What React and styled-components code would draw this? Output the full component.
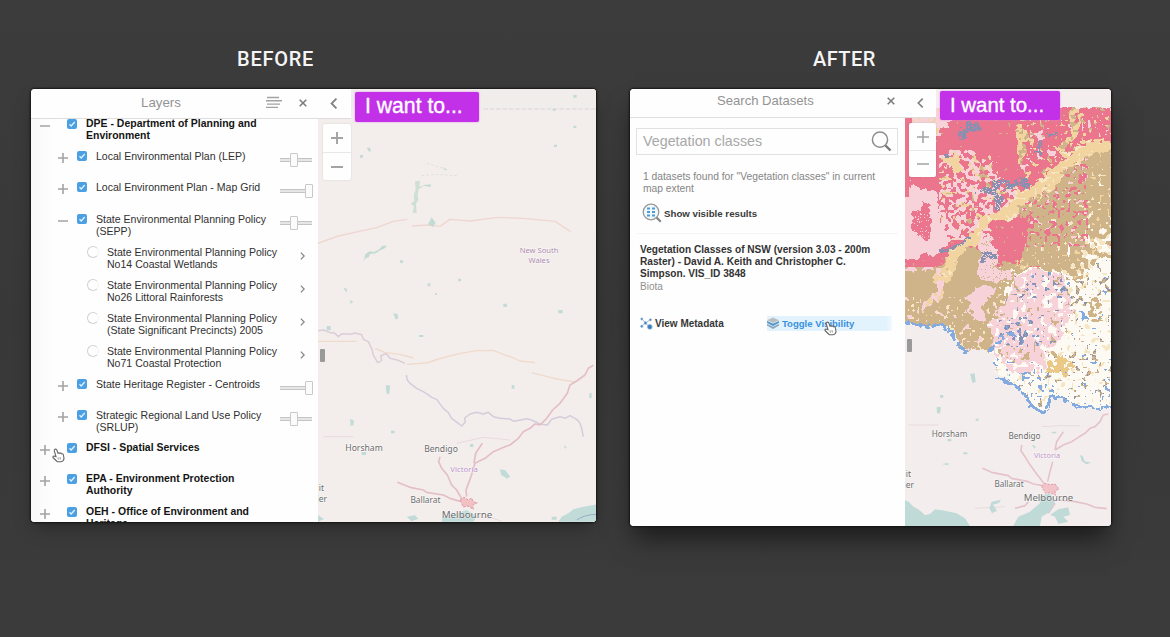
import React from "react";
import styled, { createGlobalStyle } from "styled-components";

const GlobalStyle = createGlobalStyle`
  * { box-sizing: border-box; }
  body { margin: 0; background: #3a3a3a; font-family: "Liberation Sans", Arial, sans-serif; }
  button { font: inherit; border: 0; padding: 0; background: none; }
`;

const Stage = styled.main`
  width: 1170px;
  height: 637px;
  padding: 47px 59px 0 31px;
  display: flex;
  align-items: flex-start;
  gap: 34px;
  overflow: hidden;
  background: linear-gradient(#3c3c3c, #383838 50%, #3b3b3b);
`;

const Column = styled.section`
  width: ${(p) => p.$width}px;
  flex: none;
`;

const Caption = styled.h2`
  margin: 0;
  height: 42px;
  padding-left: ${(p) => p.$indent}px;
  font: 500 20px/25px Roboto, sans-serif;
  letter-spacing: ${(p) => p.$spacing || 0}px;
  color: #f5f5f5;
`;

const Window = styled.div`
  position: relative;
  display: flex;
  height: ${(p) => p.$height}px;
  border-radius: 4px;
  overflow: hidden;
  background: #fefefe;
`;

const Shadow = styled.div`
  border-radius: 4px;
  box-shadow: 0 0 2px 1px #151515, ${(p) => (p.$deep ? "0 16px 24px -4px rgba(0,0,0,.55)" : "0 8px 18px -4px rgba(0,0,0,.35)")};
`;

const Panel = styled.aside`
  width: ${(p) => p.$width}px;
  flex: none;
  display: flex;
  flex-direction: column;
  overflow: hidden;
  background: #fefefe;
`;

const PanelHeader = styled.header`
  height: ${(p) => p.$height}px;
  flex: none;
  display: flex;
  align-items: center;
  border-bottom: 1px solid #dedede;
  padding: 0 ${(p) => p.$right}px ${(p) => p.$lift}px 0;
  gap: 17px;
  color: #858585;
`;

const PanelTitle = styled.h3`
  margin: 0;
  padding-left: ${(p) => p.$indent}px;
  flex: 1;
  font-weight: 400;
  font-size: ${(p) => p.$size}px;
  line-height: 16px;
  color: #939393;
  white-space: nowrap;
`;

const LayerList = styled.ul`
  list-style: none;
  margin: -1px 0 0;
  padding: 0;
`;

const ListClip = styled.div`
  flex: 1;
  overflow: hidden;
`;

const LayerRow = styled.li`
  height: ${(p) => p.$height}px;
  display: flex;
  align-items: flex-start;
  padding-left: ${(p) => [9, 27, 56][p.$level]}px;
  padding-right: ${(p) => (p.$level === 2 ? 13 : 5)}px;
  background: linear-gradient(90deg, #f9f8f8, #fefefe 20px);
`;

const Expander = styled.span`
  width: 10px;
  height: 12px;
  margin-right: ${(p) => (p.$level === 0 ? 17 : 9)}px;
  padding-top: 3px;
  display: flex;
`;

const Tick = styled.span`
  width: 10px;
  height: 10px;
  margin: 1px 9px 0 0;
  border-radius: 2px;
  background: #4b9fe3;
  display: flex;
`;

const Radio = styled.span`
  width: 12px;
  height: 12px;
  margin: 0 8px 0 0;
  border-radius: 50%;
  border: 1px solid #d2d2d2;
  border-right-color: #f3f3f3;
`;

const LayerName = styled.span`
  flex: 1;
  font-size: ${(p) => (p.$strong ? 10.44 : 10.55)}px;
  line-height: 12px;
  letter-spacing: ${(p) => (p.$strong ? 0.02 : 0)}px;
  font-weight: ${(p) => (p.$strong ? 700 : 400)};
  color: ${(p) => (p.$strong ? "#141414" : "#303030")};
  white-space: pre-line;
`;

const RowChevron = styled.span`
  padding-top: 6px;
  display: flex;
  color: #868686;
`;

const SliderTrack = styled.span`
  width: 33px;
  height: 14px;
  margin-top: 3px;
  padding-left: ${(p) => (p.$full ? 25 : 10)}px;
  background: linear-gradient(#c4c4c4, #c4c4c4) 0 5px / ${(p) => (p.$full ? 28 : 32)}px 1px no-repeat,
    linear-gradient(#c4c4c4, #c4c4c4) 0 8px / ${(p) => (p.$full ? 28 : 32)}px 1px no-repeat,
    linear-gradient(#e6e6e6, #e6e6e6) 0 6px / ${(p) => (p.$full ? 28 : 32)}px 2px no-repeat;
`;

const SliderThumb = styled.span`
  display: block;
  width: 8px;
  height: 14px;
  border: 1px solid #c9c9c9;
  border-radius: 1px;
  background: #fbfbfb;
`;

const MapPane = styled.div`
  position: relative;
  flex: 1;
  min-width: 0;
  background: #f3eeec;
`;

const MapSvg = styled.svg`
  display: block;
`;

/* Controls floating over the map canvas. */
const MapControls = styled.div`
  position: absolute;
  inset: 0 auto auto 0;
  display: flex;
  align-items: flex-start;
`;

const ControlStack = styled.div`
  width: ${(p) => p.$width}px;
  display: flex;
  flex-direction: column;
  align-items: flex-end;
  gap: ${(p) => p.$gap}px;
`;

const BackButton = styled.button`
  width: 100%;
  height: ${(p) => p.$height}px;
  padding-right: 1px;
  display: grid;
  place-items: center;
  background: #fefefe;
  border-bottom: 1px solid #ddd;
  color: #828282;
`;

const ZoomBox = styled.div`
  width: ${(p) => p.$width}px;
  background: #fefefe;
  border-radius: 2px;
  box-shadow: 0 0 2px rgba(0, 0, 0, 0.14);
`;

const ZoomButton = styled.button`
  display: grid;
  place-items: center;
  width: 100%;
  height: ${(p) => p.$height}px;
  & + & { border-top: 1px solid #e8e8e8; }
`;

const WantButton = styled.button`
  width: ${(p) => p.$width}px;
  height: ${(p) => p.$height}px;
  margin: ${(p) => p.$top}px 0 0 4px;
  padding: 0 0 2px 10px;
  border-radius: 2px;
  background: #c231e8;
  box-shadow: 0 0 2px #dd83f2;
  color: #fff;
  text-align: left;
  font-size: ${(p) => p.$size}px;
  line-height: 24px;
  -webkit-text-stroke: 0.35px #fff;
  white-space: nowrap;
`;

const Handle = styled.div`
  position: absolute;
  left: 2px;
  top: ${(p) => p.$top}px;
  width: 5px;
  height: 13px;
  border-radius: 1px;
  background: #999;
`;

const SearchBody = styled.div`
  display: flex;
  flex-direction: column;
  padding: 10px 7px 0 6px;
`;

const SearchField = styled.div`
  height: 27px;
  display: flex;
  align-items: center;
  justify-content: space-between;
  padding: 0 5px 1px 6px;
  border: 1px solid #e2e2e2;
  font-size: 14.3px;
  color: #a8a8a8;
`;

const ResultCount = styled.p`
  margin: 16px 0 0 7px;
  font-size: 10.28px;
  line-height: 12px;
  color: #858585;
  white-space: pre-line;
`;

const ShowVisible = styled.button`
  display: flex;
  align-items: center;
  gap: 2px;
  height: 20px;
  margin: 8px 0 0 6px;
  font-size: 9.7px;
  font-weight: 700;
  color: #3a3a3a;
`;

const ResultCard = styled.article`
  margin-top: 10px;
  padding: 10px 0 0 4px;
  border-top: 1px solid #f5f5f5;
`;

const ResultTitle = styled.h4`
  margin: 0;
  font-size: 10.12px;
  line-height: 12px;
  color: #333;
  white-space: pre-line;
`;

const ResultTopic = styled.p`
  margin: 0;
  font-size: 10px;
  line-height: 13px;
  color: #909090;
`;

const ActionBar = styled.div`
  display: flex;
  margin-top: 23px;
`;

const Action = styled.button`
  width: ${(p) => p.$width}px;
  height: 15px;
  display: flex;
  align-items: center;
  gap: ${(p) => (p.$active ? 3 : 2)}px;
  font-size: ${(p) => (p.$active ? 9.55 : 10)}px;
  font-weight: 700;
  color: ${(p) => (p.$active ? "#3990dc" : "#363636")};
  background: ${(p) => (p.$active ? "linear-gradient(90deg, #e2f3fd 95%, #f1f9fe)" : "none")};
`;

const Pointer = styled.svg`
  position: absolute;
  left: ${(p) => p.$x}px;
  top: ${(p) => p.$y}px;
`;

const Plus = ({ size = 10, minus = false, w = 1.6 }) => (
  <svg width={size} height={size} viewBox="0 0 10 10" stroke="#a3a3a3" strokeWidth={w} fill="none">
    <path d={minus ? "M0 5H10" : "M0 5H10M5 0V10"} />
  </svg>
);

const Check = () => (
  <svg width="10" height="10" viewBox="0 0 10 10" fill="none" stroke="#e6f4ff" strokeWidth="1.3">
    <path d="M2.5 5.3 4.2 7 7.7 3" />
  </svg>
);

const Chevron = ({ back, width = 5, height = 8 }) => (
  <svg width={width} height={height} viewBox="0 0 6 9" fill="none" stroke="currentColor" strokeWidth="1.5">
    <path d={back ? "M5 .5 1 4.5 5 8.5" : "M1 .5 5 4.5 1 8.5"} />
  </svg>
);

const Cross = () => (
  <svg width="8" height="8" viewBox="0 0 8 8" stroke="#7c7c7c" strokeWidth="1.6">
    <path d="M.7.7 7.3 7.3M7.3.7.7 7.3" />
  </svg>
);

const LinesIcon = () => (
  <svg width="16" height="13" viewBox="0 0 16 13" stroke="#a2a2a2" strokeWidth="1.4">
    <path d="M1 1.5H13M0 4.8H16M1 8.1H14M0 11.4H12" />
  </svg>
);

const Hand = ({ x, y }) => (
  <Pointer $x={x} $y={y} width="13" height="15" viewBox="0 0 13 15">
    <path
      d="M3 1.2Q4.3.7 4.8 2L6 5.2Q7.2 4.5 7.8 5.3 9 4.7 9.5 5.8 11 5.4 11.4 7L12 10.5Q11.8 13.3 9 13.8L5.5 13.8Q4 12.5 1 9.5.7 8 2 8L4 8.7 2.3 3Q2 1.8 3 1.2Z"
      fill="#fff" stroke="#666" strokeWidth="1.1"
    />
    <path d="M6 9.5 6.4 11.6M8 9.2 8.3 11.5" stroke="#777" strokeWidth=".8" />
  </Pointer>
);

const SearchIcon = () => (
  <svg width="21" height="21" viewBox="0 0 21 21" fill="none">
    <circle cx="9" cy="8.7" r="7.6" stroke="#8d8d8d" strokeWidth="1.5" />
    <path d="m14.5 14.5 5 5" stroke="#777" strokeWidth="2.4" />
  </svg>
);

const VisibleIcon = () => (
  <svg width="20" height="20" viewBox="0 0 20 20" fill="none">
    <circle cx="9" cy="9" r="7.8" stroke="#999" strokeWidth="1.3" fill="#f2f9fd" />
    <path d="m14.6 14.6 4.2 4.2" stroke="#888" strokeWidth="2.2" />
    <path d="M5 5.5H8M5 9H8M5 12.5H8M10 5.5H13M10 9H13M10 12.5H13" stroke="#4d9bd7" strokeWidth="2" />
  </svg>
);

const MetadataIcon = () => (
  <svg width="13" height="13" viewBox="0 0 13 13" fill="#397dbb" stroke="#86acd0" strokeWidth=".8">
    <path d="m2 2 3.5 4L10 2.8M5.5 6 2 9M5.5 6 9.5 10" fill="none" />
    <circle cx="1.8" cy="1.9" r="1" /><circle cx="10.4" cy="2.8" r="1" /><circle cx="5.5" cy="6" r="1.3" />
    <circle cx="1.8" cy="9.3" r="1.1" /><circle cx="9.8" cy="9.9" r="2.3" />
  </svg>
);

const LayersIcon = () => (
  <svg width="12" height="13" viewBox="0 0 12 13">
    <path d="m0 8.5 6 3.5 6-3.5V6.8L6 9.8 0 6.8Z" fill="#8aa7bd" />
    <path d="m0 5.7 6 3.3 6-3.3V4L6 6.8 0 4Z" fill="#4d93c7" />
    <path d="m0 3.2 6-2.7 6 2.7L6 6Z" fill="#b9bec0" />
  </svg>
);

/* Deterministic noise, so that the raster looks the same on every render. */
const hash = (x, y, s = 0) => {
  let h = Math.imul(x + 1013, 374761393) ^ Math.imul(y + 577, 668265263) ^ Math.imul(s + 7, 974634777);
  h = Math.imul(h ^ (h >>> 13), 1274126177);
  return ((h ^ (h >>> 16)) >>> 0) / 4294967296;
};
const noise = (x, y, s) => {
  const i = Math.floor(x), j = Math.floor(y), u = x - i, v = y - j;
  const a = hash(i, j, s) * (1 - u) + hash(i + 1, j, s) * u;
  const b = hash(i, j + 1, s) * (1 - u) + hash(i + 1, j + 1, s) * u;
  return a * (1 - v) + b * v;
};
const inside = (pts, x, y) => {
  let hit = false;
  for (let i = 0, j = pts.length - 2; i < pts.length; j = i, i += 2) {
    if (pts[i + 1] > y !== pts[j + 1] > y &&
      x < ((pts[j] - pts[i]) * (y - pts[i + 1])) / (pts[j + 1] - pts[i + 1]) + pts[i]) hit = !hit;
  }
  return hit;
};
const near = (pts, r, x, y) => {
  for (let i = 0; i + 3 < pts.length; i += 2) {
    const dx = pts[i + 2] - pts[i], dy = pts[i + 3] - pts[i + 1];
    const t = Math.max(0, Math.min(1, ((x - pts[i]) * dx + (y - pts[i + 1]) * dy) / (dx * dx + dy * dy)));
    if (Math.hypot(x - pts[i] - t * dx, y - pts[i + 1] - t * dy) < r) return true;
  }
  return false;
};

const ROSE = "#ea758d", BLUSH = "#f7d3d9", TAN = "#cfb48a", SAND = "#f1d49f", PALE = "#f6e6c4";
const CREAM = "#fdfaf4", SLATE = "#8790b0", BLUE = "#83abe0", OCHRE = "#eac885";

/* Vegetation classes in map units (three to a pixel). */
const EXTENT = [0, 82, 660, 82, 660, 985, 600, 985, 540, 970, 500, 955, 462, 945, 455, 990, 435, 1000, 405, 975, 385, 935, 340, 900, 310, 880, 290, 850, 300, 825, 270, 810, 215, 812, 190, 800, 180, 760, 140, 735, 90, 738, 0, 722];
const TAN_AREA = [0, 575, 130, 565, 180, 515, 255, 508, 290, 550, 375, 552, 395, 470, 400, 410, 340, 380, 450, 295, 520, 240, 660, 190, 660, 650, 560, 610, 430, 560, 350, 585, 320, 640, 370, 680, 300, 740, 290, 810, 180, 810, 90, 745, 0, 745];
const CREAM_AREA = [660, 540, 610, 540, 560, 600, 500, 620, 520, 700, 490, 770, 440, 830, 370, 840, 290, 810, 280, 1010, 660, 1010];
const BLUSH_LOW = [350, 590, 430, 565, 510, 600, 530, 690, 500, 770, 440, 830, 390, 850, 330, 820, 300, 790, 280, 740, 310, 700, 340, 650];
const BLUSH_WEST = [0, 350, 50, 300, 85, 330, 125, 340, 145, 420, 155, 460, 150, 520, 90, 530, 0, 545];
const ROSE_WEST = [65, 400, 85, 350, 105, 400, 110, 465, 75, 480, 50, 460];
const ROSE_MID = [285, 420, 380, 395, 400, 420, 385, 500, 375, 545, 330, 545, 300, 520];
const RIVER = [650, 190, 580, 210, 520, 240, 440, 310, 340, 385, 270, 425, 230, 485, 175, 525, 155, 590];
const BLUE_EDGE = [[30, 727, 95, 738, 135, 734, 168, 756, 188, 798, 210, 815, 225, 795], [285, 810, 312, 788, 328, 758, 365, 765], [310, 895, 350, 912, 385, 938, 405, 973, 435, 996, 455, 987, 462, 948, 500, 955, 540, 975, 600, 986, 645, 980]];
const SLATE_SPOTS = [[200, 155, 235, 130, 13], [310, 305, 345, 308, 15], [265, 337, 305, 340, 10], [307, 310, 307, 370, 9], [370, 306, 390, 306, 9], [155, 518, 225, 478, 7], [455, 170, 475, 162, 6], [430, 190, 425, 222, 5], [270, 525, 285, 520, 9], [145, 220, 160, 222, 5]];

const vegetationAt = (c, r) => {
  const px = c * 3 + 31, py = r * 3 + 82;
  const x = px + (noise(c / 7, r / 7, 1) - 0.5) * 32 + (noise(c / 2.5, r / 2.5, 11) - 0.5) * 14;
  const y = py + (noise(c / 7, r / 7, 3) - 0.5) * 32 + (noise(c / 2.5, r / 2.5, 12) - 0.5) * 14;
  const n = noise(c / 2.6, r / 2.6, 5), m = noise(c / 3.4, r / 3.4, 6), k = hash(c, r, 7);
  const wx = px + (noise(c / 3, r / 3, 8) - 0.5) * 14, wy = py + (noise(c / 3, r / 3, 9) - 0.5) * 14;
  if (BLUE_EDGE.some((e) => near(e, 4.4, wx, wy)) && n > 0.32) return BLUE;
  if (!inside(EXTENT, wx, wy)) return null;
  if (SLATE_SPOTS.some(([a, b, d, e, w]) => near([a, b, d, e], w, x, y)) && k > 0.18) return SLATE;
  if (near(RIVER, 15, px + (x - px) * 0.7, py + (y - py) * 0.7)) return n > 0.8 ? PALE : SAND;
  if (near(RIVER, 28, x, y) && px > 320 && m > 0.5) return n > 0.5 ? PALE : SAND;
  if (px < 42 && py > 280 && py < 350) return ROSE;
  if (inside(ROSE_WEST, x, y)) return k > 0.9 ? BLUSH : ROSE;
  if (inside(BLUSH_WEST, x, y)) return BLUSH;
  if (inside(ROSE_MID, x, y)) return n > 0.88 ? TAN : ROSE;
  if (near([250, 480, 285, 520, 265, 575, 320, 585], 19, x, y)) return k > 0.93 ? TAN : BLUSH;
  if (near([275, 630, 235, 680, 255, 710], 19, x, y)) return BLUSH;
  if (near([135, 580, 135, 640, 95, 680], 13, x, y)) return n > 0.6 ? SAND : BLUSH;
  if (inside(BLUSH_LOW, x, y)) {
    const band = (py > 575 && py < 655) || (py > 710 && py < 800 && px > 330 && px < 450);
    if (n > (band ? 0.66 : 0.84)) return k > 0.3 ? SLATE : BLUE;
    return m > 0.8 ? TAN : m < 0.26 || (px > 440 && m < 0.36) ? CREAM : BLUSH;
  }
  if (inside(CREAM_AREA, x, y)) {
    if (near([470, 865, 510, 860], 19, x, y) && n > 0.25) return OCHRE;
    if (near([595, 670, 600, 730], 12, x, y) && n > 0.4) return TAN;
    if (near([325, 820, 370, 860, 430, 840], 25, x, y) && m > 0.35) return BLUSH;
    if (near([350, 875, 400, 890, 450, 920], 17, x, y) && n > 0.67) return BLUE;
    const high = py < 680 ? 0.12 : 0;
    return n > 0.8 - high ? (k > 0.3 ? TAN : SLATE) : m > 0.79 ? PALE : m < 0.14 ? BLUE : CREAM;
  }
  if (inside(TAN_AREA, x, y)) {
    if (px < 310) return py > 650 && n > 0.76 ? (m > 0.5 ? PALE : BLUSH) : TAN;
    if (px > 380 && py < 500 && px < 580 && n > 0.64) return m > 0.3 ? ROSE : BLUSH;
    const fade = Math.max(0, (px - 430) / 220) * Math.max(0, (py - 330) / 250);
    if (m > 0.86 - fade * 0.5) return n > 0.5 ? CREAM : PALE;
    return n > 0.82 ? SAND : TAN;
  }
  if (py > 560) return n > 0.6 ? TAN : px > 300 ? CREAM : BLUSH;
  if (near([372, 135, 385, 175, 370, 235], 13, x, y)) return n > 0.4 ? SAND : TAN;
  if (near([155, 240, 185, 250], 17, x, y)) return SAND;
  if (near([535, 90, 540, 145, 500, 200], 15, x, y)) return n > 0.4 ? SAND : TAN;
  if (px > 50 && px < 170 && py < 175 && x + y < 290) return n > 0.7 ? SAND : BLUSH;
  if (px > 375) return n > 0.7 ? (m > 0.5 ? TAN : SAND) : m > 0.82 ? BLUSH : ROSE;
  if (px > 130 && py > 210 && py < 480 && x - y < 40) return n > 0.55 ? BLUSH : m > 0.65 ? (n > 0.3 ? SAND : TAN) : ROSE;
  return n > 0.9 ? TAN : ROSE;
};

const buildVegetation = () => {
  const paths = {};
  for (let r = 0; r < 308; r++) {
    let start = 0, current = null;
    for (let c = 0; c <= 206; c++) {
      const color = c < 206 ? vegetationAt(c, r) : null;
      if (color !== current) {
        if (current) paths[current] = (paths[current] || "") + `M${start} ${18 + r}h${c - start}v1h${start - c}z`;
        start = c;
        current = color;
      }
    }
  }
  return Object.entries(paths);
};
const VEGETATION = buildVegetation();

const Label = ({ x, y, size = 9, color = "#6c6c6c", anchor = "middle", children }) => (
  <text x={x} y={y} fontSize={size} fill={color} textAnchor={anchor} fontFamily='"Noto Sans", sans-serif'
    stroke="#fff" strokeWidth="1.2" strokeOpacity=".6" paintOrder="stroke">{children}</text>
);

const BeforeMap = () => (
  <MapSvg width="278" height="433" viewBox="0 0 278 433">
    <rect width="278" height="433" fill="#f3eeec" />
    <rect x="33" width="245" height="20" fill="#f1edea" />
    <g transform="translate(-8 -9) scale(.33333)" fill="none" strokeLinejoin="round">
      <path d="M520 87H860" stroke="#ded5da" strokeWidth="3" strokeDasharray="14 5" />
      <path d="M24 490 85 468 200 443 250 424 292 418M305 438 355 435 390 439 420 418 480 423 565 412 650 416 735 424 782 455" stroke="#f0d6d1" strokeWidth="4" />
      <g fill="#c4dad4">
        <path d="M315 304 330 302 328 318 340 320 326 327 323 345 325 360 318 372 320 400 308 398 312 378 302 372 313 362 311 345 317 330Z" fill="#d0dfd4" />
        <path d="m365 412 12 16-8 13-15-8Z" />
        <path d="m160 545 6-22 12-9 14 2 16-8 8-10 14-2-4 8-18 8-10 8-18 2-4 10-10 3Z" />
        <path d="m170 203 10 0 3 10-6 2ZM150 225h9v8h-9zM397 260l14 9-5 3ZM732 194h9v7h-9zM790 137h9v7h-9zM270 541h9v8h-9zM353 610h8v9h-8zM445 596h8v8h-8zM100 622l12 6-3 10ZM120 660l10 5-8 6ZM580 671h10v10h-10zM790 45h10v8h-10zM728 86h9v6h-9zM334 316l28-3v8zM375 640h6v5h-6z" />
      </g>
      <path d="M335 287 375 283 445 287M350 250 370 255 400 265" stroke="#dfe0dc" strokeWidth="3" strokeDasharray="8 6" />
      <g transform="translate(0 660)">
        <path d="M24 92 42 90 60 98 72 98 85 110 96 101 122 103 135 99 155 104 160 118 175 125 186 148 190 165 203 188 215 182 212 168 228 160 240 175 262 180 285 190" stroke="#dccdd9" strokeWidth="4.5" />
        <path d="M24 124H140M195 145 225 158 270 163 310 174M290 193 350 189 385 177 420 168 450 160 500 152 550 151 580 163 610 174 630 183 675 188M665 218 700 227 740 237 795 246" stroke="#f0dacc" strokeWidth="4" />
        <path d="M289 225 292 240 300 250 320 265 345 278 365 292 380 298 400 325 415 338 425 355 445 370 455 378 466 366 464 354 480 342 500 337 520 342 535 337 550 350 570 355 600 357 612 364 650 356 665 360 690 372 712 375 725 358 750 350 765 355 780 347 800 358 810 370 815 385 820 410" stroke="#d5ccdb" strokeWidth="4.5" />
        <path d="M850 196 835 205 825 225 800 243 780 255 772 280 750 310 728 330 710 355 690 375 675 372 660 385 640 395 625 415 600 435 585 440 550 455 525 475 495 490M495 490 483 530 468 570 470 590M517 430 497 460 492 490M390 470 386 485 395 505 412 525 425 555 440 570 460 605M262 547 300 562 340 570 350 577 400 585 420 595 450 604" stroke="#e4bec6" strokeWidth="5" />
        <path d="M40 410 130 410M440 430 520 412 600 420M480 650 550 655 575 664" stroke="#e9d9df" strokeWidth="3" />
        <path d="M450 600 462 592 475 600 485 594 490 606 502 608 488 616 490 628 474 618 460 621Z" fill="#f3c0c4" stroke="#dd98a4" strokeWidth="3" strokeDasharray="7 4" />
        <g fill="#c1dcd8">
          <path d="M395 665 398 648 430 645 470 630 500 650 490 665ZM745 665 755 650 775 640 790 628 820 620 860 613 860 665ZM725 650h15v9h-15zM290 650l25-4 10 10-20 8ZM24 645l18 12-18 8Z" />
          <path d="m570 508 15 2 16 20-10 6-18-12ZM250 40l12 2 3 12-8 5ZM50 78h12v13H50zM227 255l14 2-4 26-7-2ZM120 356l12 6-2 14-8 2ZM605 255h8v11h-8zM480 432h10v9h-10zM745 30h13v10h-13zM582 12h8v7h-8zM762 435l8 7-5 5ZM838 280h7v14h-7zM243 392h11v8h-11zM327 105h13v6h-13zM155 456h13v9h-13z" />
        </g>
        <path d="M800 660Q825 643 860 643" stroke="#9fa9c8" strokeWidth="3" />
      </g>
    </g>
    <Label x="221" y="164" size="7.6" color="#ad8aad">New South</Label>
    <Label x="221" y="174" size="7.6" color="#ad8aad">Wales</Label>
    <Label x="46" y="361.5" size="8.6">Horsham</Label>
    <Label x="123" y="363" size="8.6">Bendigo</Label>
    <Label x="146" y="383" size="7.8" color="#bd91c7">Victoria</Label>
    <Label x="107.5" y="413.5" size="8.4">Ballarat</Label>
    <Label x="149" y="428.5" size="9.8">Melbourne</Label>
    <Label x="6" y="402" size="8.5" anchor="end">it</Label>
    <Label x="9" y="413" size="8.5" anchor="end">ier</Label>
  </MapSvg>
);

const AfterMap = () => (
  <MapSvg width="206" height="437" viewBox="0 0 206 437">
    <rect width="206" height="437" fill="#f3eeed" />
    <g transform="translate(-10 -9) scale(.33333) translate(0 660)" fill="none" strokeLinejoin="round">
      <path d="M40 375H130M440 380 500 377 555 377M240 625 330 620" stroke="#e8dade" strokeWidth="3" />
      <path d="M640 342 625 345 615 365 600 380 585 385 570 400 550 412 530 425 505 435 480 450M505 395 485 425 480 450M473 485 465 515 458 545M380 435 378 452 390 470 402 490 420 515 435 535 450 555M262 505 290 517 340 527 350 535 400 545 415 552 445 557M360 625 390 617 400 605M490 600 540 605 575 612 600 622 635 626M480 610 460 640" stroke="#e6c2cb" strokeWidth="5" />
      <path d="M440 560 450 550 465 554 480 552 492 567 480 572 482 586 466 578 452 580Z" fill="#f2c4c8" stroke="#dd9aa8" strokeWidth="3" strokeDasharray="7 4" />
      <g fill="#c0dad8">
        <path d="M30 600 42 606 55 620 70 628 90 645 105 642 120 628 150 632 185 640 210 655 225 678H30ZM355 678 370 650 405 635 422 620 435 610 430 590 465 580 480 605 465 635 440 650 435 678ZM490 628 520 622 525 645 505 650 520 665 490 672 480 650 465 645Z" />
        <path d="m225 222 14-2 3 25-9 5ZM125 320l13 2-3 18h-9ZM135 285h10v8h-10zM290 605l28-6-6 10-18 5 12 18-15 8-8-15ZM555 465l8 3 6 16 20 4-15 5-14-10ZM410 435l12 3-3 8ZM470 395h14v5h-14zM205 457h12v6h-12zM140 492l20-3v7zM242 356h9v6h-9zM158 417h11v7h-11z" />
      </g>
    </g>
    <g shapeRendering="crispEdges">
      {VEGETATION.map(([color, d]) => <path key={color} fill={color} d={d} />)}
    </g>
    <Label x="44.5" y="347.5" size="8.2">Horsham</Label>
    <Label x="119.5" y="349.5" size="8.2">Bendigo</Label>
    <Label x="142" y="368.5" size="7.4" color="#bd91c7">Victoria</Label>
    <Label x="104" y="398" size="8.1">Ballarat</Label>
    <Label x="143.5" y="412" size="9.6">Melbourne</Label>
    <Label x="6" y="388" size="8.5" anchor="end">it</Label>
    <Label x="9" y="398.5" size="8.5" anchor="end">ier</Label>
  </MapSvg>
);

const LAYERS = [
  { level: 0, height: 32, open: true, name: "DPE - Department of Planning and\nEnvironment" },
  { level: 1, height: 31, slider: "half", name: "Local Environmental Plan (LEP)" },
  { level: 1, height: 32, slider: "full", name: "Local Environment Plan - Map Grid" },
  { level: 1, height: 33, slider: "half", open: true, name: "State Environmental Planning Policy\n(SEPP)" },
  { level: 2, height: 33, name: "State Environmental Planning Policy\nNo14 Coastal Wetlands" },
  { level: 2, height: 33, name: "State Environmental Planning Policy\nNo26 Littoral Rainforests" },
  { level: 2, height: 33, name: "State Environmental Planning Policy\n(State Significant Precincts) 2005" },
  { level: 2, height: 33, name: "State Environmental Planning Policy\nNo71 Coastal Protection" },
  { level: 1, height: 31, slider: "full", name: "State Heritage Register - Centroids" },
  { level: 1, height: 33, slider: "half", name: "Strategic Regional Land Use Policy\n(SRLUP)" },
  { level: 0, height: 31, name: "DFSI - Spatial Services" },
  { level: 0, height: 33, name: "EPA - Environment Protection\nAuthority" },
  { level: 0, height: 33, name: "OEH - Office of Environment and\nHeritage" },
];

const Layer = ({ level, height, open, slider, name }) => (
  <LayerRow $level={level} $height={height}>
    {level < 2 && <Expander $level={level}><Plus minus={open} /></Expander>}
    {level < 2 ? <Tick><Check /></Tick> : <Radio />}
    <LayerName $strong={level === 0}>{name}</LayerName>
    {slider && <SliderTrack $full={slider === "full"}><SliderThumb /></SliderTrack>}
    {level === 2 && <RowChevron><Chevron /></RowChevron>}
  </LayerRow>
);

export default function App() {
  return (
    <>
      <GlobalStyle />
      <Stage>
        <Column $width={565}>
          <Caption $indent={206} $spacing={0.75}>BEFORE</Caption>
          <Shadow>
            <Window $height={433}>
              <Panel $width={287}>
                <PanelHeader $height={30} $right={11} $lift={2}>
                  <PanelTitle $indent={110} $size={13.3}>Layers</PanelTitle>
                  <LinesIcon />
                  <Cross />
                </PanelHeader>
                <ListClip>
                  <LayerList>
                    {LAYERS.map((layer) => <Layer key={layer.name} {...layer} />)}
                  </LayerList>
                </ListClip>
              </Panel>
              <MapPane>
                <BeforeMap />
                <MapControls>
                  <ControlStack $width={33} $gap={5}>
                    <BackButton $height={30}><Chevron back width={8} height={11} /></BackButton>
                    <ZoomBox $width={28}>
                      <ZoomButton $height={28}><Plus size={12} /></ZoomButton>
                      <ZoomButton $height={28}><Plus size={12} minus /></ZoomButton>
                    </ZoomBox>
                  </ControlStack>
                  <WantButton $width={124} $height={30} $top={3} $size={21.2}>I want to...</WantButton>
                </MapControls>
                <Handle $top={260} />
              </MapPane>
              <Hand x={21} y={359} />
            </Window>
          </Shadow>
        </Column>

        <Column $width={481}>
          <Caption $indent={183} $spacing={0.45}>AFTER</Caption>
          <Shadow $deep>
            <Window $height={437}>
              <Panel $width={275}>
                <PanelHeader $height={29} $right={10} $lift={4}>
                  <PanelTitle $indent={87} $size={13.1}>Search Datasets</PanelTitle>
                  <Cross />
                </PanelHeader>
                <SearchBody>
                  <SearchField>Vegetation classes<SearchIcon /></SearchField>
                  <ResultCount>{'1 datasets found for "Vegetation classes" in current\nmap extent'}</ResultCount>
                  <ShowVisible><VisibleIcon />Show visible results</ShowVisible>
                  <ResultCard>
                    <ResultTitle>{"Vegetation Classes of NSW (version 3.03 - 200m\nRaster) - David A. Keith and Christopher C.\nSimpson. VIS_ID 3848"}</ResultTitle>
                    <ResultTopic>Biota</ResultTopic>
                    <ActionBar>
                      <Action $width={127}><MetadataIcon />View Metadata</Action>
                      <Action $width={125} $active><LayersIcon />Toggle Visibility</Action>
                    </ActionBar>
                  </ResultCard>
                </SearchBody>
              </Panel>
              <MapPane>
                <AfterMap />
                <MapControls>
                  <ControlStack $width={31} $gap={5}>
                    <BackButton $height={29}><Chevron back width={7} height={10} /></BackButton>
                    <ZoomBox $width={27}>
                      <ZoomButton $height={27}><Plus size={12} w={1.3} /></ZoomButton>
                      <ZoomButton $height={27}><Plus size={12} w={1.3} minus /></ZoomButton>
                    </ZoomBox>
                  </ControlStack>
                  <WantButton $width={120} $height={29} $top={2} $size={20.4}>I want to...</WantButton>
                </MapControls>
                <Handle $top={250} />
              </MapPane>
              <Hand x={194} y={232} />
            </Window>
          </Shadow>
        </Column>
      </Stage>
    </>
  );
}
